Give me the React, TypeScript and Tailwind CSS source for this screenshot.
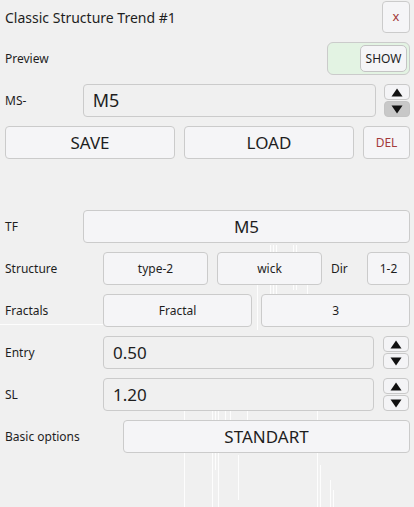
import React from "react";

const font = { fontFamily: '"Noto Sans", "Open Sans", sans-serif' };

function Spinner({ downActive = false }: { downActive?: boolean }) {
  return (
    <div className="flex flex-col w-[26px] h-[33px] gap-[1px]">
      <div className="flex-1 flex items-center justify-center rounded-[4px] border border-[#c9c9c9] bg-[#f4f4f6]">
        <svg width="12" height="9" viewBox="0 0 12 9"><path d="M6 0.5L11.5 8.5H0.5Z" fill="#111" /></svg>
      </div>
      <div className={"flex-1 flex items-center justify-center rounded-[4px] border " + (downActive ? "border-[#c4c4c4] bg-[#c8c8c8]" : "border-[#c9c9c9] bg-[#f4f4f6]")}>
        <svg width="12" height="9" viewBox="0 0 12 9"><path d="M0.5 0.5H11.5L6 8.5Z" fill="#111" /></svg>
      </div>
    </div>
  );
}

const btn = "flex items-center justify-center h-[33px] rounded-[4px] border border-[#cbcbcb] bg-[#f5f5f7] text-[#1e1e1e]";

const lines: [number, number, number][] = [
  [184, 395, 507],
  [212, 400, 507],
  [215, 400, 470],
  [218, 400, 507],
  [225, 400, 440],
  [230, 400, 445],
  [238, 455, 500],
  [247, 400, 420],
  [257, 280, 330],
  [270, 245, 300],
  [273, 245, 300],
  [276, 245, 300],
  [293, 245, 290],
  [296, 245, 290],
  [307, 280, 320],
  [317, 400, 507],
  [320, 465, 507],
  [330, 480, 507],
  [333, 490, 507],
];

export default function App() {
  return (
    <div className="relative w-[414px] h-[507px] bg-[#f0f0f0] overflow-hidden" style={font}>
      <svg className="absolute inset-0 pointer-events-none" width="414" height="507">
        <g stroke="#ffffff" strokeWidth="1" opacity="0.9">
          <line x1="0" y1="324.5" x2="103" y2="324.5" />
          {lines.map(([x, y1, y2], i) => (
            <line key={i} x1={x + 0.5} y1={y1} x2={x + 0.5} y2={y2} />
          ))}
        </g>
      </svg>
      <div className="relative flex flex-col pt-[1px] pl-[5px] pr-[4px]">
        <div className="flex items-center justify-between h-[32px]">
          <span className="text-[14px] text-[#1e1e1e]">Classic Structure Trend #1</span>
          <div className="flex items-center justify-center w-[28px] h-[32px] rounded-[4px] border border-[#cbcbcb] bg-[#f5f5f7] text-[13px] text-[#a33a3a]">x</div>
        </div>
        <div className="flex items-center justify-between h-[33px] mt-[9px]">
          <span className="text-[12px] text-[#1e1e1e]">Preview</span>
          <div className="flex items-center justify-end w-[83px] h-[33px] rounded-[6px] border border-[#cbcbcb] bg-[#e3f3e3] pr-[2px]">
            <div className="flex items-center justify-center w-[47px] h-[27px] rounded-[5px] border border-[#c4c4c4] bg-[#f5f5f7] text-[12px] text-[#1e1e1e]">SHOW</div>
          </div>
        </div>
        <div className="flex items-center h-[33px] mt-[9px]">
          <span className="w-[78px] text-[12px] text-[#1e1e1e]">MS-</span>
          <div className="flex items-center w-[294px] h-[33px] rounded-[4px] border border-[#cbcbcb] bg-[#f0f0f0] pl-[9px] text-[18px] text-[#1e1e1e]">M5</div>
          <div className="ml-[8px]"><Spinner downActive /></div>
        </div>
        <div className="flex items-center h-[33px] mt-[9px] gap-[9px]">
          <div className={btn + " w-[170px] text-[17px]"}>SAVE</div>
          <div className={btn + " w-[170px] text-[17px]"}>LOAD</div>
          <div className={btn + " w-[47px] text-[12px] !text-[#a33a3a]"}>DEL</div>
        </div>
        <div className="flex items-center h-[33px] mt-[51px]">
          <span className="w-[78px] text-[12px] text-[#1e1e1e]">TF</span>
          <div className={btn + " w-[327px] text-[17px]"}>M5</div>
        </div>
        <div className="flex items-center h-[33px] mt-[9px]">
          <span className="w-[98px] text-[12px] text-[#1e1e1e]">Structure</span>
          <div className={btn + " w-[105px] text-[12px]"}>type-2</div>
          <div className={btn + " w-[105px] text-[12px] ml-[9px]"}>wick</div>
          <span className="ml-[9px] w-[36px] text-[12px] text-[#1e1e1e]">Dir</span>
          <div className={btn + " w-[43px] text-[12px]"}>1-2</div>
        </div>
        <div className="flex items-center h-[33px] mt-[9px]">
          <span className="w-[98px] text-[12px] text-[#1e1e1e]">Fractals</span>
          <div className={btn + " w-[150px] text-[12px]"}>Fractal</div>
          <div className={btn + " w-[149px] text-[12px] ml-[9px]"}>3</div>
        </div>
        <div className="flex items-center h-[33px] mt-[9px]">
          <span className="w-[98px] text-[12px] text-[#1e1e1e]">Entry</span>
          <div className="flex items-center w-[271px] h-[33px] rounded-[4px] border border-[#cbcbcb] bg-[#f0f0f0] pl-[9px] text-[17px] text-[#1e1e1e]">0.50</div>
          <div className="ml-[9px]"><Spinner /></div>
        </div>
        <div className="flex items-center h-[33px] mt-[9px]">
          <span className="w-[98px] text-[12px] text-[#1e1e1e]">SL</span>
          <div className="flex items-center w-[271px] h-[33px] rounded-[4px] border border-[#cbcbcb] bg-[#f0f0f0] pl-[9px] text-[17px] text-[#1e1e1e]">1.20</div>
          <div className="ml-[9px]"><Spinner /></div>
        </div>
        <div className="flex items-center h-[33px] mt-[9px]">
          <span className="w-[118px] text-[12px] text-[#1e1e1e]">Basic options</span>
          <div className={btn + " w-[287px] text-[17px]"}>STANDART</div>
        </div>
      </div>
    </div>
  );
}
